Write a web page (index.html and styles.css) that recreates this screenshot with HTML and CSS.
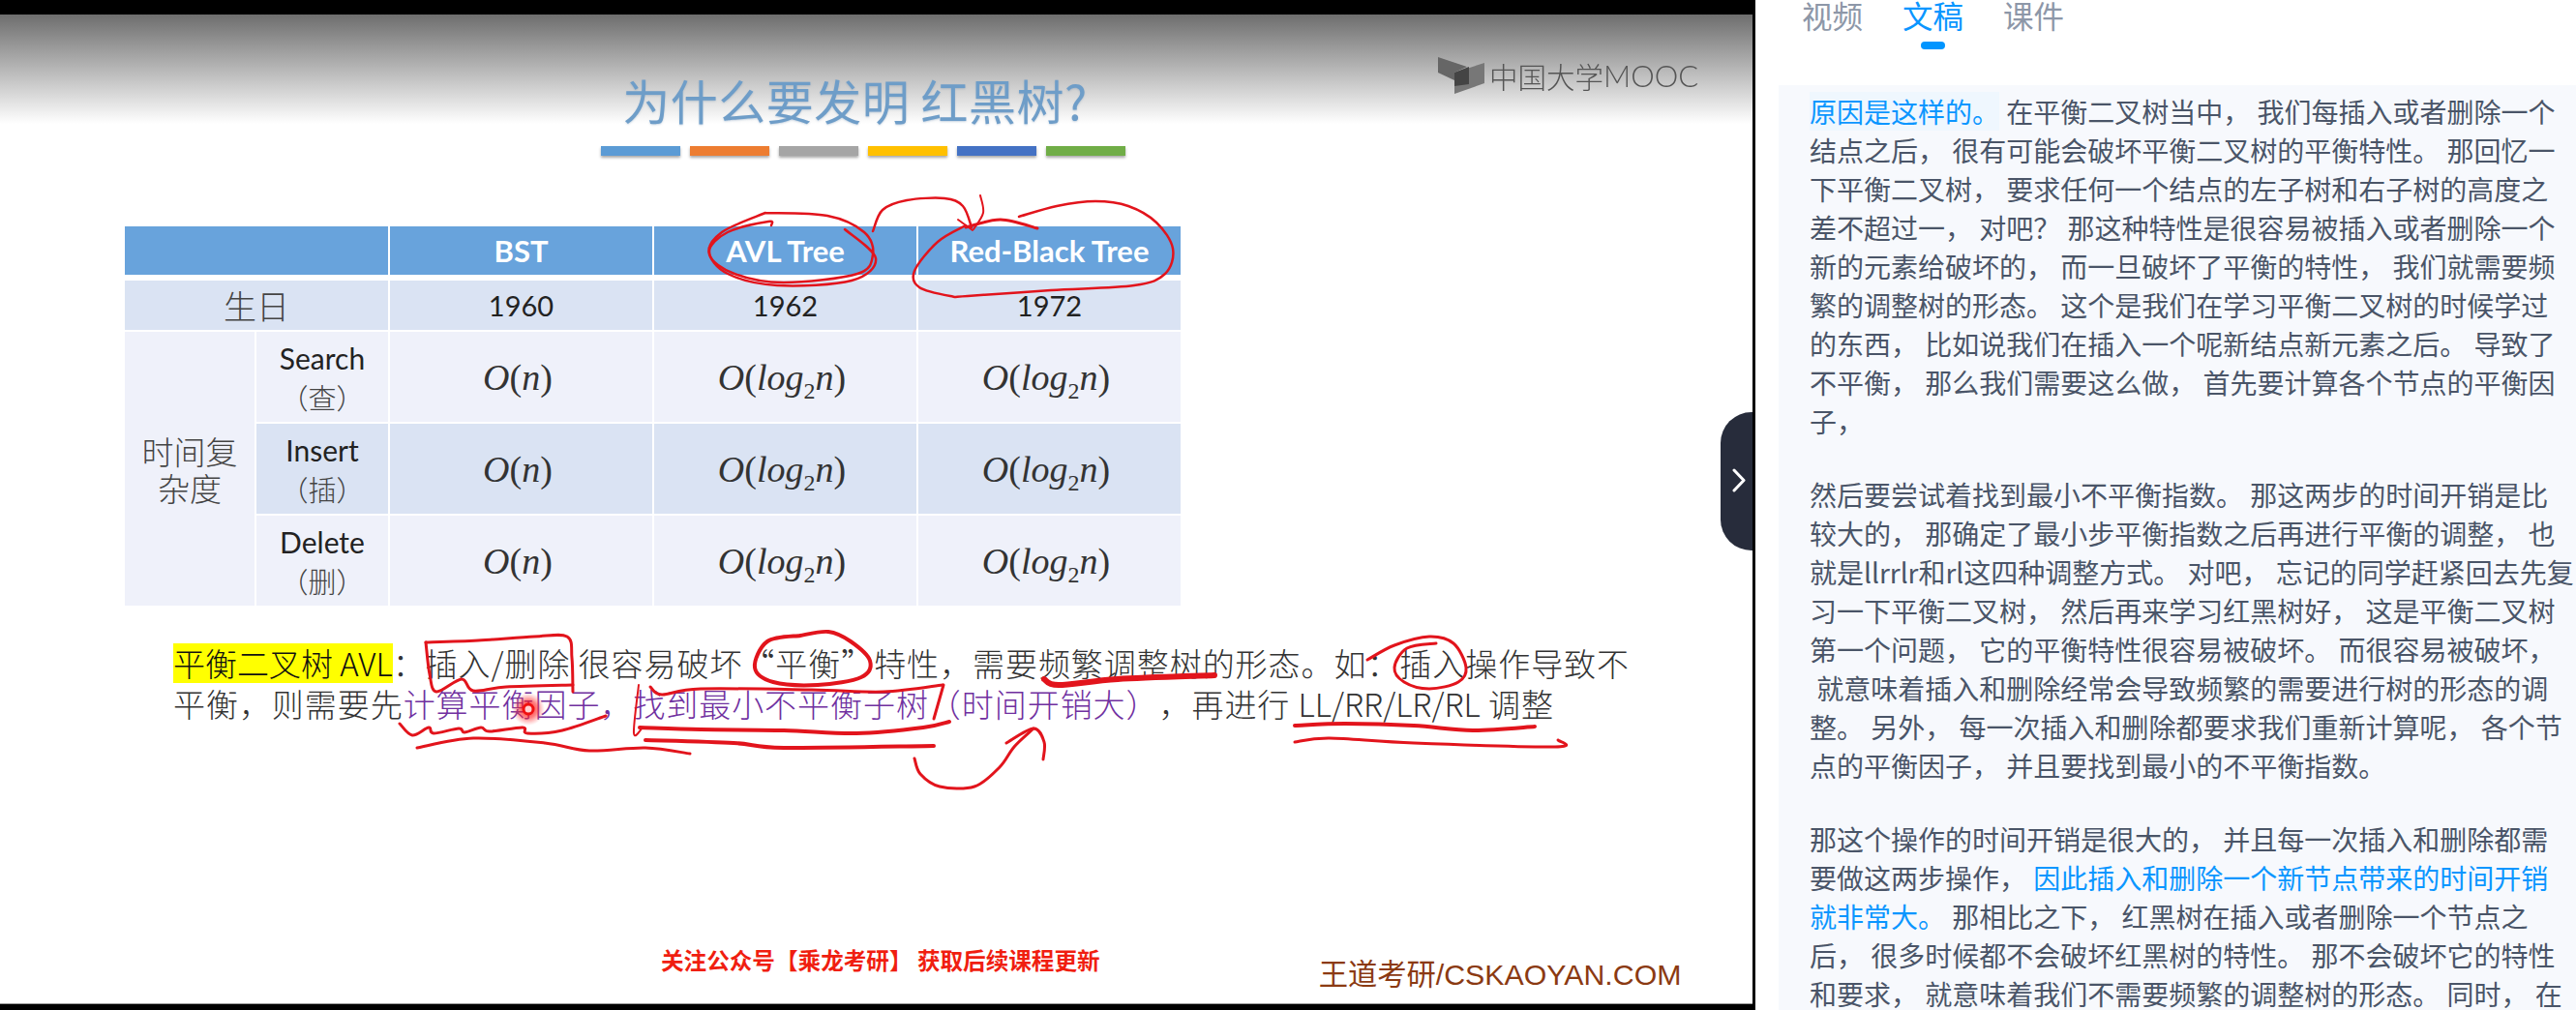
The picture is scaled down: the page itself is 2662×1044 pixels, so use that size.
FILE: index.html
```html
<!DOCTYPE html>
<html lang="zh-CN">
<head>
    <meta charset="UTF-8">
    <title>为什么要发明红黑树</title>
    <link rel="stylesheet" href="styles.css">
</head>
<body>
    <div class="video">
        <div class="slide">
            <div class="logo">
                <svg class="logo-mark" width="48" height="40" viewBox="0 0 48 40">
                    <path d="M0 1 30 11 17 17V25L0 17Z" fill="#666"/>
                    <path d="M17 17 48 7V28L17 39Z" fill="#777"/>
                    <path d="M17 17 32 11V29L17 31Z" fill="#444"/>
                </svg>
                <span class="logo-cn">中国大学</span><span class="logo-en">MOOC</span>
            </div>
            <h1 class="title">为什么要发明 红黑树?</h1>
            <div class="bars">
                <span class="bar bar-blue"></span>
                <span class="bar bar-orange"></span>
                <span class="bar bar-gray"></span>
                <span class="bar bar-yellow"></span>
                <span class="bar bar-navy"></span>
                <span class="bar bar-green"></span>
            </div>
            <div class="table">
                <div class="cell head wide"></div>
                <div class="cell head">BST</div>
                <div class="cell head">AVL Tree</div>
                <div class="cell head">Red-Black Tree</div>

                <div class="cell band wide cjk">生日</div>
                <div class="cell band">1960</div>
                <div class="cell band">1962</div>
                <div class="cell band">1972</div>

                <div class="cell light time cjk">时间复<br>杂度</div>
                <div class="cell light op"><span>Search</span><span class="op-cn">（查）</span></div>
                <div class="cell light math"><span><i>O</i>(<i>n</i>)</span></div>
                <div class="cell light math"><span><i>O</i>(<i>log</i><sub>2</sub><i>n</i>)</span></div>
                <div class="cell light math"><span><i>O</i>(<i>log</i><sub>2</sub><i>n</i>)</span></div>

                <div class="cell band op"><span>Insert</span><span class="op-cn">（插）</span></div>
                <div class="cell band math"><span><i>O</i>(<i>n</i>)</span></div>
                <div class="cell band math"><span><i>O</i>(<i>log</i><sub>2</sub><i>n</i>)</span></div>
                <div class="cell band math"><span><i>O</i>(<i>log</i><sub>2</sub><i>n</i>)</span></div>

                <div class="cell light op"><span>Delete</span><span class="op-cn">（删）</span></div>
                <div class="cell light math"><span><i>O</i>(<i>n</i>)</span></div>
                <div class="cell light math"><span><i>O</i>(<i>log</i><sub>2</sub><i>n</i>)</span></div>
                <div class="cell light math"><span><i>O</i>(<i>log</i><sub>2</sub><i>n</i>)</span></div>
            </div>
            <p class="note"><mark class="note-mark">平衡二叉树 AVL</mark>：插入/删除 很容易破坏“平衡”特性，需要频繁调整树的形态。如：插入操作导致不<br>平衡，则需要先<span class="note-purple">计算平衡因子，找到最小不平衡子树（时间开销大）</span>，再进行 <span class="note-latin">LL/RR/LR/RL</span> 调整</p>
            <div class="credits">
                <span class="credit-red">关注公众号【乘龙考研】 获取后续课程更新</span>
                <span class="credit-brown">王道考研/CSKAOYAN.COM</span>
            </div>
        </div>
        <svg id="ink" class="ink" width="1811" height="1044" viewBox="0 0 1811 1044">
            <defs>
                <radialGradient id="penGlow">
                    <stop offset="0" stop-color="#f00" stop-opacity="0.9"/>
                    <stop offset="0.55" stop-color="#f22" stop-opacity="0.55"/>
                    <stop offset="1" stop-color="#f66" stop-opacity="0"/>
                </radialGradient>
            </defs>
            <circle cx="546" cy="733" r="17" fill="url(#penGlow)"/>
            <circle cx="546" cy="733" r="5" fill="#ffd0d0" stroke="#f01010" stroke-width="3"/>
        </svg>
        <button class="collapse">
            <svg width="14" height="25" viewBox="0 0 14 25">
                <path d="M2 2 12 12.5 2 23" fill="none" stroke="#fff" stroke-width="3" stroke-linecap="round" stroke-linejoin="round"/>
            </svg>
        </button>
    </div>
    <aside class="panel">
        <nav class="tabs">
            <div class="tab">视频</div>
            <div class="tab active">文稿<span class="tab-dot"></span></div>
            <div class="tab">课件</div>
        </nav>
        <div class="transcript">
<p><span class="key key-bg">原因是这样的。</span> 在平衡二叉树当中， 我们每插入或者删除一个
结点之后， 很有可能会破坏平衡二叉树的平衡特性。 那回忆一
下平衡二叉树， 要求任何一个结点的左子树和右子树的高度之
差不超过一， 对吧？ 那这种特性是很容易被插入或者删除一个
新的元素给破坏的， 而一旦破坏了平衡的特性， 我们就需要频
繁的调整树的形态。 这个是我们在学习平衡二叉树的时候学过
的东西， 比如说我们在插入一个呢新结点新元素之后。 导致了
不平衡， 那么我们需要这么做， 首先要计算各个节点的平衡因
子，</p>
<p>然后要尝试着找到最小不平衡指数。 那这两步的时间开销是比
较大的， 那确定了最小步平衡指数之后再进行平衡的调整， 也
就是llrrlr和rl这四种调整方式。 对吧， 忘记的同学赶紧回去先复
习一下平衡二叉树， 然后再来学习红黑树好， 这是平衡二叉树
第一个问题， 它的平衡特性很容易被破坏。 而很容易被破坏，
 就意味着插入和删除经常会导致频繁的需要进行树的形态的调
整。 另外， 每一次插入和删除都要求我们重新计算呢， 各个节
点的平衡因子， 并且要找到最小的不平衡指数。</p>
<p>那这个操作的时间开销是很大的， 并且每一次插入和删除都需
要做这两步操作， <span class="key">因此插入和删除一个新节点带来的时间开销
就非常大。</span> 那相比之下， 红黑树在插入或者删除一个节点之
后， 很多时候都不会破坏红黑树的特性。 那不会破坏它的特性
和要求， 就意味着我们不需要频繁的调整树的形态。 同时， 在</p>
        </div>
    </aside>
    <script>
        // Teacher's pen strokes over the slide: [width, x, y, x, y, ...]
        const strokes = [
            // AVL Tree circle
            [2.5, 797,233, 794,229, 752,240, 733,260, 752,283, 803,295, 880,290, 905,267, 873,237],
            [2.5, 791,220, 855,223, 893,240, 902,263, 886,283, 810,292, 759,283, 733,263, 746,240, 791,220],
            // arc and arrow to Red-Black Tree
            [2.5, 902,239, 912,217, 937,207, 976,205, 995,213, 1004,235],
            [2, 1013,202, 1016,220, 1006,237],
            [2, 990,227, 1005,238],
            // Red-Black Tree circle
            [2.5, 1053,224, 1092,213, 1132,208, 1166,213, 1195,230, 1212,257, 1204,283, 1172,295, 1086,300, 1000,306, 982,306, 950,297, 945,280, 969,250, 998,233],
            [3, 998,235, 1034,227, 1072,236],
            // box round 插入/删除
            [3, 440,664, 494,662, 552,658, 586,658, 591,680, 592,715],
            [3, 440,664, 444,697, 451,715, 477,702, 489,714, 523,710, 592,708],
            // circle round 平衡
            [4, 827,657, 793,663, 780,690, 799,705, 845,708, 890,700, 899,683, 879,663, 856,653, 827,657],
            // under 计算平衡因子
            [3, 413,748, 426,760, 443,752, 448,758, 474,753, 480,757, 497,752, 506,756, 540,752, 545,758, 581,755, 626,740],
            [3, 431,773, 489,763, 563,768, 609,776, 667,773, 713,779],
            // box and lines under 找到最小不平衡子树
            [2, 660,708, 655,758, 664,752],
            [3, 672,710, 684,718, 724,712, 839,713, 913,715, 974,708],
            [3, 975,708, 965,743],
            [4, 661,752, 724,754, 810,755, 885,758, 954,752, 981,746],
            [4, 667,765, 758,768, 810,773, 965,771],
            // curved arrow up to 时间开销大
            [3, 945,784, 951,800, 971,813, 1007,813, 1033,793, 1048,772, 1068,753],
            [3, 1040,768, 1068,753, 1079,767, 1078,785],
            // under 频繁调整树
            [6, 1079,702, 1094,708, 1155,702, 1255,698],
            // circle round 插入
            [3, 1413,682, 1441,667, 1477,658, 1502,665, 1515,690, 1507,705, 1477,712, 1451,705, 1441,690, 1454,670, 1484,665],
            // under LL/RR/LR/RL 调整
            [4, 1338,750, 1390,748, 1461,750, 1522,755, 1586,751],
            [3, 1338,767, 1374,763, 1461,768, 1607,772, 1610,765]
        ];

        // Catmull-Rom through the points, as cubic segments
        function smoothPath(p) {
            let d = `M${p[0]} ${p[1]}`;
            const at = i => Math.max(0, Math.min(p.length - 2, i));
            for (let i = 0; i < p.length - 2; i += 2) {
                const a = at(i - 2), b = i, c = i + 2, e = at(i + 4);
                const x1 = p[b] + (p[c] - p[a]) / 6, y1 = p[b + 1] + (p[c + 1] - p[a + 1]) / 6;
                const x2 = p[c] - (p[e] - p[b]) / 6, y2 = p[c + 1] - (p[e + 1] - p[b + 1]) / 6;
                d += `C${x1.toFixed(1)} ${y1.toFixed(1)} ${x2.toFixed(1)} ${y2.toFixed(1)} ${p[c]} ${p[c + 1]}`;
            }
            return d;
        }

        const ink = document.getElementById('ink');
        strokes.forEach(s => {
            const path = document.createElementNS('http://www.w3.org/2000/svg', 'path');
            path.setAttribute('d', smoothPath(s.slice(1)));
            path.setAttribute('stroke-width', s[0]);
            path.setAttribute('class', 'ink-line');
            ink.appendChild(path);
        });
    </script>
</body>
</html>
```

FILE: styles.css
```css
body {
    margin: 0;
    width: 2662px;
    height: 1044px;
    overflow: hidden;
    display: flex;
    background: #fff;
    font-family: "Noto Sans CJK SC", sans-serif;
    text-spacing-trim: space-all;
}

/* video side */
.video {
    position: relative;
    flex: none;
    width: 1814px;
    height: 1044px;
    box-sizing: border-box;
    padding-top: 15px;
    border-right: 3px solid #000;
    background: #000;
}
.slide {
    position: relative;
    box-sizing: border-box;
    height: 1023px;
    padding: 58px 0 0 129px;
    border-bottom: 1px solid #999;
    background: linear-gradient(#6e6e6e, #fff) no-repeat;
    background-size: 100% 113px;
    background-color: #fff;
}
.logo {
    position: absolute;
    top: 43px;
    left: 1486px;
    display: flex;
    align-items: center;
    height: 40px;
    color: #555;
    filter: blur(0.4px);
}
.logo-mark {
    margin-right: 5px;
}
.logo-cn {
    font-size: 29.5px;
    font-weight: 300;
}
.logo-en {
    font-family: Lato, sans-serif;
    font-size: 31px;
    font-weight: 300;
}
.title {
    margin: 0 0 0 492px;
    width: 525px;
    padding-right: 16px;
    font-size: 49px;
    font-weight: 400;
    letter-spacing: 0.5px;
    line-height: 60px;
    text-align: center;
    color: #6e9dc8;
    text-shadow: 0 1px 2px rgba(90,130,170,0.3);
}
.bars {
    display: flex;
    gap: 10px;
    margin: 18px 0 0 492px;
}
.bar {
    width: 82px;
    height: 10px;
    box-shadow: 0 2px 3px rgba(0,0,0,0.35);
}
.bar-blue { background: #5b9bd5; }
.bar-orange { background: #ed7d31; }
.bar-gray { background: #a5a5a5; }
.bar-yellow { background: #ffc000; }
.bar-navy { background: #4472c4; }
.bar-green { background: #70ad47; }

.table {
    display: grid;
    grid-template-columns: 134px 136px 271px 271px 271px;
    grid-template-rows: auto 51px 93px 93px 93px;
    gap: 2px;
    margin-top: 73px;
    width: 1091px;
    font-family: Lato, sans-serif;
    font-size: 29px;
    color: #222;
}
.cell {
    display: flex;
    align-items: center;
    justify-content: center;
    text-align: center;
}
.head {
    height: 50px;
    margin-bottom: 4px;
    background: #68a3dc;
    color: #fff;
    font-size: 31px;
    font-weight: 700;
}
.band {
    background: #dae3f3;
}
.light {
    background: #eff1fa;
}
.wide {
    grid-column: span 2;
}
.cjk {
    font-family: "Noto Sans CJK SC", sans-serif;
    font-weight: 300;
    color: #444;
}
.band.cjk {
    font-size: 34px;
}
.time {
    grid-row: span 3;
    font-size: 33px;
    line-height: 38px;
}
.op {
    flex-direction: column;
    font-size: 30px;
    line-height: 40px;
}
.op-cn {
    font-family: "Noto Sans CJK SC", sans-serif;
    font-size: 29px;
    font-weight: 300;
    color: #444;
}
.math {
    padding-right: 7px;
    font-family: "Liberation Serif", serif;
    font-size: 38px;
    color: #333;
}
.math sub {
    font-size: 24px;
    line-height: 0;
}

.note {
    margin: 38px 0 0 50px;
    font-size: 33px;
    font-weight: 300;
    letter-spacing: 0.95px;
    line-height: 42px;
    white-space: nowrap;
    color: #333;
}
.note-mark {
    display: inline-block;
    height: 41px;
    line-height: 41px;
    letter-spacing: 0;
    background: #ff0;
    color: #111;
}
.note-purple {
    color: #7030a0;
}
.note-latin {
    letter-spacing: 0;
}
.credits {
    display: flex;
    align-items: flex-start;
    gap: 228px;
    margin: 227px 0 0 554px;
    line-height: 34px;
}
.credit-red {
    font-size: 23.6px;
    font-weight: 700;
    color: #f01e10;
}
.credit-brown {
    margin-top: 16px;
    margin-left: -2px;
    font-family: "Liberation Sans", "Noto Sans CJK SC", sans-serif;
    font-size: 30.3px;
    color: #8b3a12;
}

/* pen strokes lie over the slide */
.ink {
    position: absolute;
    top: 0;
    left: 0;
    pointer-events: none;
    filter: blur(0.4px);
}
.ink-line {
    fill: none;
    stroke: #e2141c;
    stroke-linecap: round;
    stroke-linejoin: round;
}
.collapse {
    position: absolute;
    top: 426px;
    right: 0;
    width: 33px;
    height: 143px;
    padding: 0 0 0 4px;
    border: none;
    border-radius: 32px 0 0 32px;
    background: #272c3b;
}

/* transcript side */
.panel {
    flex: 1;
    min-width: 0;
}
.tabs {
    display: flex;
    gap: 41px;
    padding-left: 48px;
    height: 51px;
}
.tab {
    display: flex;
    flex-direction: column;
    align-items: center;
    font-size: 31.5px;
    line-height: 30px;
    color: #8d97a8;
}
.tab.active {
    color: #0a96ff;
}
.tab-dot {
    width: 25px;
    height: 8px;
    margin-top: 13px;
    border-radius: 4px;
    background: #0095ff;
}
.transcript {
    height: 956px;
    box-sizing: border-box;
    margin: 37px 0 0 24px;
    padding: 7px 0 0 32px;
    overflow: hidden;
    background: #f7f9fd;
    font-size: 28px;
    word-spacing: 1px;
    line-height: 40px;
    color: #4a5568;
}
.transcript p {
    margin: 0 0 36px;
    white-space: pre;
}
.key {
    color: #0a96ff;
}
.key-bg {
    background: #eff7fe;
}
```
